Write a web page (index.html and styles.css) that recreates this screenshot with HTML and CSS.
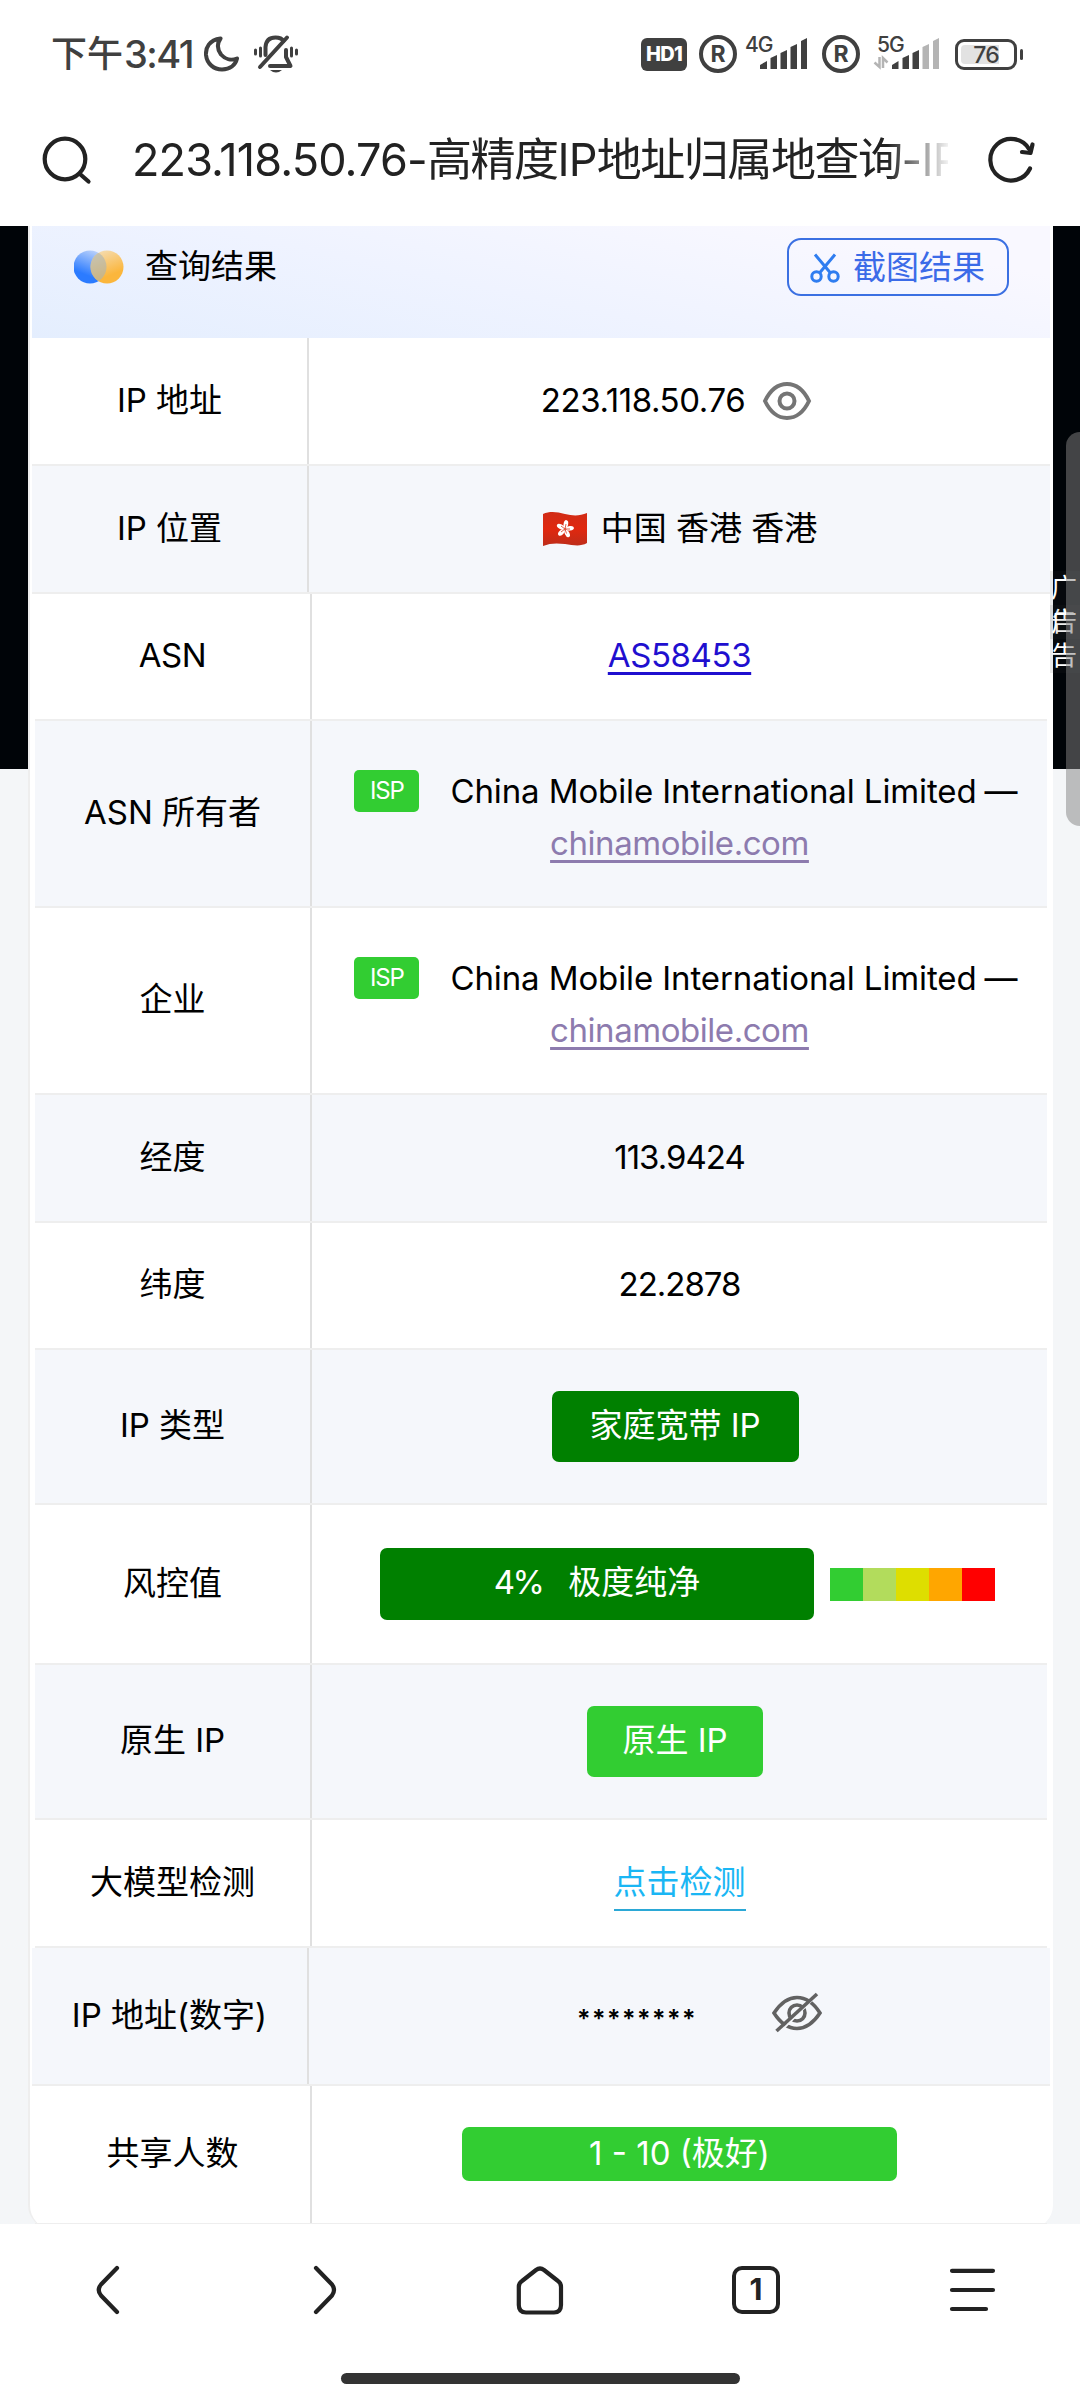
FILE: index.html
```html
<!DOCTYPE html>
<html lang="zh-CN">
<head>
<meta charset="utf-8">
<title>223.118.50.76-高精度IP地址归属地查询</title>
<link rel="stylesheet" href="styles.css">
</head>
<body>
<div class="screen">
  <header class="status">
    <div class="status-left">
      <span class="clock">下午<span class="clock-num">3:41</span></span>
      <svg class="moon" width="36" height="36" viewBox="0 0 36 36" fill="none" stroke="#404040" stroke-width="4" stroke-linejoin="round"><path d="M16.500 2.500C5 4 1.500 12 2 19C3 28 10 33.500 18 33.500C26 33.500 31.500 29 33 22.500C27 25 21 23 17 18.500C13 13 13 7.500 16.500 2.500Z"/></svg>
      <svg class="bell" width="46" height="40" viewBox="0 0 46 40" fill="none" stroke="#404040" stroke-width="4" stroke-linecap="round" stroke-linejoin="round"><path d="M12.500 21V13C13 6 17 3.500 22.500 3.500C26 3.500 29 4.500 30.500 7"/><path d="M34 3.500L7 33"/><path d="M33 16V23L37.500 32H17"/><path d="M7.500 14V22M2.500 16V20M38.500 14V22M43.500 16V20" stroke-width="3"/><path d="M17 36H29Q23 41 17 36Z" fill="#404040" stroke="none"/></svg>
    </div>
    <div class="status-right">
      <span class="hd">HD1</span>
      <span class="reg">R</span>
      <svg class="sig" width="64" height="36" viewBox="0 0 64 36" fill="#404040"><text x="0" y="16" class="net">4G</text><path d="M15 33V29L22 25V33ZM25.500 33V22L32 19V33ZM35.500 33V17L42 14V33ZM45.500 33V11L52 8V33ZM56 33V5L62 2V33Z"/></svg>
      <span class="reg reg-two">R</span>
      <svg class="sig sig-two" width="68" height="36" viewBox="0 0 68 36" fill="#404040"><text x="4" y="16" class="net">5G</text><path d="M19 33V29L25.500 25V33ZM29.500 33V22L36 19V33ZM39.500 33V17L46 14V33Z"/><path d="M49.500 33V11L56 8V33ZM60 33V5L66 2V33Z" fill="#b4b4b4"/><path d="M6.500 21V31L1.500 26.500M10 32V22L14.500 26.500" fill="none" stroke="#b4b4b4" stroke-width="2.500"/></svg>
      <span class="battery"><span class="battery-body"><span class="battery-num">76</span></span><span class="battery-nub"></span></span>
    </div>
  </header>

  <div class="urlbar">
    <svg class="search" width="52" height="52" viewBox="0 0 52 52" fill="none" stroke="#222" stroke-width="4.200" stroke-linecap="round"><circle cx="24" cy="25" r="20.300"/><path d="M39.500 40.500L47.500 47.500"/></svg>
    <div class="url"><span class="url-lat">223.118.50.76-</span>高精度<span class="url-lat">IP</span>地址归属地查询<span class="url-lat">-IP</span></div>
    <svg class="reload" width="50" height="50" viewBox="0 0 50 50" fill="none" stroke="#222" stroke-width="4.200" stroke-linecap="round" stroke-linejoin="round"><path d="M43 33.500A20.800 20.800 0 1 1 42 14"/><path d="M45.500 9.500L43.500 18L35 17"/></svg>
  </div>

  <main class="viewport">
    <section class="card">
      <div class="card-head">
        <svg class="logo" width="50" height="34" viewBox="0 0 50 34"><defs><linearGradient id="b" x1=".7" y1="0" x2=".3" y2="1"><stop offset="0" stop-color="#bdd3fb"/><stop offset=".75" stop-color="#2b7bff"/></linearGradient><linearGradient id="o" x1=".3" y1="0" x2=".7" y2="1"><stop offset="0" stop-color="#f5dcb0"/><stop offset=".75" stop-color="#fbb63c"/></linearGradient><clipPath id="c"><circle cx="16" cy="17" r="16.500"/></clipPath></defs><circle cx="16" cy="17" r="16.500" fill="url(#b)"/><circle cx="33" cy="17" r="16.500" fill="url(#o)"/><circle cx="33" cy="17" r="16.500" fill="#a9b4b6" opacity=".6" clip-path="url(#c)"/></svg>
        <span class="head-title">查询结果</span>
        <span class="shot-btn">
          <svg class="scissors" width="30" height="30" viewBox="0 0 30 30" fill="none" stroke="#2f7df0" stroke-width="3"><path d="M5 1.500L20.500 20M25 1.500L9.500 20"/><circle cx="6.500" cy="23.500" r="4.700"/><circle cx="23.500" cy="23.500" r="4.700"/></svg>
          截图结果
        </span>
      </div>

      <div class="row wide"><div class="label">IP 地址</div><div class="value v-ip"><span class="lat">223.118.50.76</span>
        <svg class="eye" width="50" height="40" viewBox="0 0 50 40" fill="none" stroke="#757575" stroke-width="4"><path d="M3 20C9 7.500 17 3 25 3S41 7.500 47 20C41 32.500 33 37 25 37S9 32.500 3 20Z"/><circle cx="25" cy="20" r="7.500"/></svg></div></div>
      <div class="row wide alt"><div class="label">IP 位置</div><div class="value v-loc">
        <svg class="flag" width="46" height="36" viewBox="0 0 46 36"><defs><linearGradient id="f" x1="0" y1="0" x2="0" y2="1"><stop offset="0" stop-color="#d02c16"/><stop offset=".5" stop-color="#e0280f"/><stop offset="1" stop-color="#bd2d1a"/></linearGradient></defs><path d="M1 3C8 0 15 1 23 3S38 5 45 2V32C38 36 31 34 23 33S8 32 1 35Z" fill="url(#f)"/><g fill="#fff"><ellipse cx="23" cy="13" rx="2.300" ry="4" transform="rotate(10 23 18)"/><ellipse cx="23" cy="13" rx="2.300" ry="4" transform="rotate(82 23 18)"/><ellipse cx="23" cy="13" rx="2.300" ry="4" transform="rotate(154 23 18)"/><ellipse cx="23" cy="13" rx="2.300" ry="4" transform="rotate(226 23 18)"/><ellipse cx="23" cy="13" rx="2.300" ry="4" transform="rotate(298 23 18)"/></g><path d="M23 18L24 13M23 18L28 18M23 18L24.500 22.500M23 18L19 21M23 18L19 15" stroke="#e0604c" stroke-width="1"/></svg>
        <span>中国 香港 香港</span></div></div>
      <div class="row"><div class="label"><span class="lat">ASN</span></div><div class="value"><a class="asn lat">AS58453</a></div></div>
      <div class="row tall alt"><div class="label">ASN 所有者</div><div class="value stack"><div class="line"><span class="isp">ISP</span><span class="org">China Mobile International Limited</span><span class="dash">—</span></div><div class="line"><a class="site">chinamobile.com</a></div></div></div>
      <div class="row tall"><div class="label">企业</div><div class="value stack"><div class="line"><span class="isp">ISP</span><span class="org">China Mobile International Limited</span><span class="dash">—</span></div><div class="line"><a class="site">chinamobile.com</a></div></div></div>
      <div class="row alt long"><div class="label">经度</div><div class="value"><span class="num">113.9424</span></div></div>
      <div class="row"><div class="label">纬度</div><div class="value"><span class="num">22.2878</span></div></div>
      <div class="row alt h155"><div class="label">IP 类型</div><div class="value shift"><span class="pill dark w247">家庭宽带 IP</span></div></div>
      <div class="row h160"><div class="label">风控值</div><div class="value risk"><span class="pill dark w434"><span class="pct">4%</span>极度纯净</span><span class="scale"><i class="s1"></i><i class="s2"></i><i class="s3"></i><i class="s4"></i><i class="s5"></i></span></div></div>
      <div class="row alt h155"><div class="label">原生 IP</div><div class="value shift"><span class="pill lime w176">原生 IP</span></div></div>
      <div class="row long"><div class="label">大模型检测</div><div class="value"><a class="check">点击检测</a></div></div>
      <div class="row wide alt h138"><div class="label">IP 地址(数字)</div><div class="value v-hid"><span class="stars">********</span>
        <svg class="eye-off" width="50" height="44" viewBox="0 0 50 44" fill="none" stroke="#626262" stroke-width="3.600"><path d="M2 22C10 10 17 6.500 25 6.500S41 11 48 22C40 34 33 37.500 25 37.500S9 33 2 22Z"/><circle cx="25" cy="22" r="8"/><path d="M43 6L8 41" stroke="#f5f7fb" stroke-width="2"/><path d="M45 3L4.500 40"/></svg></div></div>
      <div class="row h139"><div class="label">共享人数</div><div class="value"><span class="pill lime share">1 - 10 (极好)</span></div></div>
    </section>
    <div class="ad ad-one">广告</div>
    <div class="ad ad-two">广告</div>
    <div class="thumb"></div>
  </main>

  <nav class="nav">
    <svg width="60" height="60" viewBox="0 0 60 60"><path d="M39 8L23 24.500Q18.500 30 23 35.500L39 52"/></svg>
    <svg width="60" height="60" viewBox="0 0 60 60"><path d="M22 8L38 24.500Q42 30 38 35.500L22 52"/></svg>
    <svg width="60" height="60" viewBox="0 0 60 60"><path d="M8.800 27Q8.800 23 12 21L26 10Q30 7 34 10L48 21Q51 23 51 27V45Q51 52.500 44 52.500H16Q8.800 52.500 8.800 45Z"/></svg>
    <span class="tab">1</span>
    <svg width="60" height="60" viewBox="0 0 60 60"><path d="M10 10.800H51M10 30H51M10 49H44"/></svg>
  </nav>
  <div class="homebar"><span class="pillbar"></span></div>
</div>
</body>
</html>
```
FILE: styles.css
```css
* { box-sizing: border-box; }
body { margin: 0; background: #fff; }
.screen {
  width: 1080px; height: 2400px; overflow: hidden;
  display: flex; flex-direction: column;
  font-family: Inter, "Noto Sans CJK SC", sans-serif;
  font-size: 33px; line-height: 50px; color: #000; white-space: nowrap;
}
svg { display: block; flex: none; }

/* status bar */
.status { height: 108px; display: flex; justify-content: space-between; color: #404040; }
.status-left { display: flex; align-items: center; padding-left: 51px; }
.clock { font-size: 36px; font-weight: 500; width: 151px; display: flex; }
.clock-num { font-size: 38px; letter-spacing: -1.500px; margin-left: 1px; }
.moon { margin-left: 2px; }
.bell { margin-left: 13px; }
.status-right { display: flex; align-items: center; padding-right: 57px; }
.hd { width: 46px; height: 33px; border-radius: 6px; background: #404040; color: #fff; font-size: 20px; font-weight: 800; line-height: 33px; text-align: center; letter-spacing: -.8px; }
.reg { width: 38px; height: 38px; margin-left: 12px; border: 4px solid #404040; border-radius: 50%; font-size: 23px; font-weight: 700; line-height: 30px; text-align: center; }
.sig { margin-left: 8px; overflow: visible; }
.net { font-size: 21px; font-weight: 500; letter-spacing: -1px; }
.reg-two { margin-left: 13px; }
.sig-two { margin-left: 13px; }
.battery { margin-left: 14px; display: flex; align-items: center; gap: 3px; }
.battery-body { width: 62px; height: 31px; padding: 3px; border: 3px solid #404040; border-radius: 9px; }
.battery-num { display: block; height: 19px; border-radius: 4px; background: linear-gradient(90deg, #e2e2e2 38px, transparent 38px); font-size: 23px; font-weight: 500; line-height: 20px; text-align: center; letter-spacing: -1px; }
.battery-nub { width: 3px; height: 11px; border-radius: 2px; background: #404040; }

/* address bar */
.urlbar { height: 118px; display: flex; align-items: flex-start; padding: 26px 43px 0 41px; }
.url { width: 816px; margin-left: 39px; font-size: 45px; line-height: 52px; letter-spacing: -1.450px; color: #222; overflow: hidden;
  -webkit-mask-image: linear-gradient(90deg, #000 755px, transparent 820px); mask-image: linear-gradient(90deg, #000 755px, transparent 820px); }
.url-lat { letter-spacing: -.850px; }
.reload { margin: 1px 0 0 auto; }

/* page */
.viewport { position: relative; height: 1998px; overflow: hidden; flex: none; background: linear-gradient(#000408 543px, #f4f6f8 543px); }
.card { margin: 0 27px 0 28px; padding: 0 3px 4px 2px; border-left: 2px solid #eee; background: #fff; border-radius: 0 0 24px 24px; }
.card-head { height: 112px; display: flex; align-items: flex-start; padding: 12px 41px 0 42px; background: linear-gradient(12deg, #e4eefe 0%, #eff3ff 45%, #f9f8ff 85%); }
.logo { margin-top: 12px; }
.head-title { margin: 3px 0 0 21px; }
.shot-btn { margin-left: auto; width: 222px; height: 58px; border: 2px solid #3b70e2; border-radius: 14px; color: #3b6be8; display: flex; line-height: 54px; padding-left: 21px; }
.scissors { margin: 13px 13px 0 0; }

.row { height: 127px; margin: 0 3px; display: flex; border-bottom: 2px solid #eee; }
.row.wide { margin: 0; height: 128px; }
.row.tall { height: 187px; }
.row.long { height: 128px; }
.row.h155 { height: 155px; }
.row.h160 { height: 160px; }
.row.wide.h138 { height: 138px; }
.row.h139 { height: 139px; }
.alt { background: #f5f7fb; }
.label { width: 277px; border-right: 2px solid #e0e0e0; display: flex; align-items: center; justify-content: center; padding-bottom: 3px; }
.value { flex: 1; display: flex; align-items: center; justify-content: center; }
.lat, .num { padding-bottom: 3px; }
.label .lat { padding-bottom: 0; }
.lat { letter-spacing: -.400px; }
.num { letter-spacing: -1px; }
.v-ip { padding-right: 6px; }
.eye { margin-left: 17px; }
.flag { margin-right: 13px; }
.v-loc span { padding-bottom: 3px; }
.asn, .site { text-decoration: underline; text-decoration-thickness: 3px; text-underline-offset: 5px; text-decoration-skip-ink: none; }
.asn { color: #1f0fcf; }
.stack { flex-direction: column; padding-top: 6px; }
.line { height: 52px; display: flex; align-items: center; }
.isp { width: 65px; height: 42px; margin: 0 31px 0 13px; border-radius: 5px; background: #32cd32; color: #fff; font-size: 24px; line-height: 41px; text-align: center; letter-spacing: -1.200px; }
.org { letter-spacing: -.100px; }
.dash { margin-left: 8px; }
.site { color: #8d7bae; letter-spacing: -.450px; }
.shift { padding-right: 9px; }
.pill { height: 71px; border-radius: 7px; color: #fff; line-height: 69px; text-align: center; }
.dark { background: #008000; }
.lime { background: #32cd32; }
.w247 { width: 247px; }
.w176 { width: 176px; }
.w434 { width: 434px; height: 72px; }
.pct { margin-right: 26px; letter-spacing: -2.500px; }
.risk { padding-left: 16px; }
.scale { display: flex; margin-left: 16px; }
.scale i { width: 33px; height: 33px; }
.s1 { background: #32cd32; }
.s2 { background: #b2dc5c; }
.s3 { background: #dede00; }
.s4 { background: #ffa600; }
.s5 { background: #f00; }
.check { color: #1ab6f4; border-bottom: 2px solid #2ba8d6; line-height: 53px; }
.stars { font-size: 25px; font-weight: 600; letter-spacing: 1.500px; padding-top: 5px; }
.v-hid { padding-left: 40px; }
.eye-off { margin: 0 0 6px 75px; }
.share { width: 435px; height: 54px; line-height: 52px; margin-bottom: 1px; }

/* floating ads and scroll thumb lie over the page */
.ad { position: absolute; left: 1050px; width: 30px; height: 68px; padding-left: 1px; background: rgba(60, 60, 60, .1); color: #fff; font-size: 26px; line-height: 34px; white-space: normal; }
.ad-one { top: 345px; }
.ad-two { top: 379px; }
.thumb { position: absolute; left: 1066px; top: 206px; width: 14px; height: 394px; border-radius: 14px 0 0 14px; background: rgba(131, 131, 131, .51); }

/* toolbar */
.nav { height: 132px; display: flex; justify-content: space-around; align-items: center; flex: none; }
.nav svg { fill: none; stroke: #222; stroke-width: 4.200; stroke-linecap: round; stroke-linejoin: round; }
.tab { width: 48px; height: 48px; margin: 0 6px; border: 4px solid #222; border-radius: 10px; font-size: 30px; font-weight: 700; line-height: 39px; text-align: center; color: #222; }
.homebar { display: flex; justify-content: center; padding-top: 17px; }
.pillbar { width: 399px; height: 11px; border-radius: 6px; background: #333; }
```
